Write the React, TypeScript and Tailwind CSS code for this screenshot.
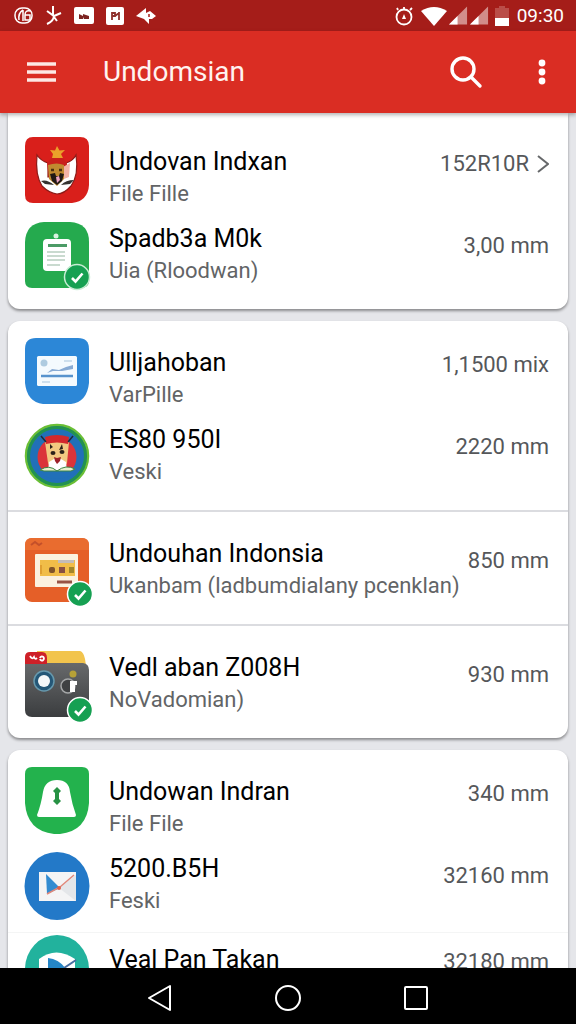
import React from "react";

type IconName = "garuda" | "clipboard" | "chart" | "mascot" | "shop" | "camera" | "bell" | "mail" | "send";

interface Entry {
  title: string;
  subtitle?: string;
  value: string;
  icon: IconName;
  lead?: boolean;
  link?: boolean;
}

const recent: Entry[] = [
  { title: "Undovan Indxan", subtitle: "File Fille", value: "152R10R", icon: "garuda", lead: true, link: true },
  { title: "Spadb3a M0k", subtitle: "Uia (Rloodwan)", value: "3,00 mm", icon: "clipboard" },
];

const reports: Entry[] = [
  { title: "Ulljahoban", subtitle: "VarPille", value: "1,1500 mix", icon: "chart", lead: true },
  { title: "ES80 950I", subtitle: "Veski", value: "2220 mm", icon: "mascot" },
];

const shop: Entry[] = [
  { title: "Undouhan Indonsia", subtitle: "Ukanbam (ladbumdialany pcenklan)", value: "850 mm", icon: "shop" },
];

const camera: Entry[] = [
  { title: "Vedl aban Z008H", subtitle: "NoVadomian)", value: "930 mm", icon: "camera" },
];

const files: Entry[] = [
  { title: "Undowan Indran", subtitle: "File File", value: "340 mm", icon: "bell", lead: true },
  { title: "5200.B5H", subtitle: "Feski", value: "32160 mm", icon: "mail" },
];

const more: Entry[] = [
  { title: "Veal Pan Takan", value: "32180 mm", icon: "send", lead: true },
];

function Badge({ cx, cy, ring }: { cx: number; cy: number; ring: string }) {
  return (
    <g>
      <circle cx={cx} cy={cy} r="12.500" fill="#16a052" stroke={ring} strokeWidth="1.500" />
      <path d={`M${cx - 5} ${cy + 1}l3.500 3.500l7-8`} fill="none" stroke="#fff" strokeWidth="2.600" />
    </g>
  );
}

const drawings: Record<IconName, React.ReactNode> = {
  garuda: (
    <>
      <path d="M8 0H55Q64 0 64 9V48Q63 64 47 66H8Q0 66 0 58V9Q0 0 8 0Z" fill="#d91f1b" />
      <path d="M12 18Q16 24 23 26V40H41V26Q48 24 51 18Q54 38 46 49Q39 57 32 57Q24 56 17 49Q10 38 12 18Z" fill="#fff" stroke="#8d1a17" strokeWidth="1.200" />
      <path d="M22 26Q26 20 32 20Q38 20 42 26L41 34H23Z" fill="#c9201b" />
      <path d="M38 30L45 26L44 40L39 42Z" fill="#f3b3a6" />
      <path d="M23 28Q32 25 39 28V42L32 49L24 42Z" fill="#c08a30" />
      <path d="M25 37L30 36L31 39H34L35 36L39 37L37 44L32 48L27 44Z" fill="#211915" />
      <path d="M26 33h3M34 33h3" stroke="#4a2f10" strokeWidth="2.500" />
      <path d="M31 40L34 39L35 43L32 46Z" fill="#eda4c2" />
      <path d="M16 44Q22 42 29 48L20 47ZM36 48Q41 43 49 43L45 47Z" fill="#353331" />
      <path d="M32 9L34.500 13.500L40 13L36 17L38 21H27L28 17L25 13L30 13.500Z" fill="#eaa12a" />
    </>
  ),
  clipboard: (
    <>
      <path d="M19 0H45Q64 1 64 20V58Q64 66 56 66H7Q0 66 0 59V20Q1 1 19 0Z" fill="#25aa4e" />
      <circle cx="31" cy="14" r="2.500" fill="#d9f2e0" />
      <rect x="18" y="17" width="28" height="32" rx="4" fill="#fff" />
      <rect x="23" y="22" width="19" height="3" fill="#4c9b66" />
      <path d="M22 30H40M22 34H40M22 38H40M22 43H35" stroke="#93b6a0" strokeWidth="1.200" />
      <Badge cx={52} cy={55} ring="#c7ecd3" />
    </>
  ),
  chart: (
    <>
      <path d="M11 0H53Q64 0 64 11V45Q62 64 46 66H18Q2 64 0 45V11Q0 0 11 0Z" fill="#2c87d7" />
      <rect x="12" y="18" width="40" height="30" rx="1.500" fill="#f4fafe" />
      <circle cx="19" cy="25" r="3.500" fill="#aecbe0" />
      <path d="M22 35L27 31L34 32L41 29L48 27V31L37 33L28 33Z" fill="#88abd4" />
      <path d="M16 38H48" stroke="#5793cd" strokeWidth="2.500" />
      <path d="M39 23H47M17 44H25" stroke="#a7c4dc" strokeWidth="1" />
    </>
  ),
  mascot: (
    <>
      <circle cx="32" cy="33" r="31" fill="#2170b8" stroke="#6abf35" strokeWidth="2.500" />
      <circle cx="32" cy="33" r="28.500" fill="none" stroke="#23924f" strokeWidth="3" />
      <circle cx="32" cy="34" r="19.500" fill="#db343a" />
      <path d="M12 46H52Q45 56 32 56Q19 56 12 46Z" fill="#2170b8" />
      <path d="M20 19H44L42 40Q40 46 32 48Q25 46 23 40Z" fill="#f2c981" />
      <path d="M20 14Q32 10 44 14L43 21Q32 18 21 21Z" fill="#d3282d" />
      <path d="M16 13L21 19M48 13L43 19" stroke="#202936" strokeWidth="1.500" />
      <path d="M25 21L28 24L25 26ZM34 27L37 21L38 26Z" fill="#2b2119" />
      <ellipse cx="28" cy="30" rx="2.500" ry="2" fill="#2b2119" />
      <ellipse cx="37" cy="29" rx="2.500" ry="2" fill="#2b2119" />
      <path d="M24 39L29 36H36L41 39L42 48H23Z" fill="#fff" />
      <path d="M29 34L32 35L36 34L35 38L32 41L30 38Z" fill="#9d2028" />
      <path d="M15 47Q24 41 32 48H19ZM32 48Q41 41 50 46L46 48Z" fill="#e9f1cd" stroke="#3d8542" strokeWidth="1" />
    </>
  ),
  shop: (
    <>
      <rect y="1" width="64" height="64" rx="7" fill="#e55f28" />
      <path d="M0 13V8Q0 1 7 1H57Q64 1 64 8V13Z" fill="#e96c2f" />
      <path d="M6 8L10 5L14 8L17 6" fill="none" stroke="#c4502a" strokeWidth="2" />
      <rect x="10" y="17" width="43" height="33" rx="1" fill="#fbf1df" />
      <rect x="15" y="23" width="35" height="16" fill="#f1bd48" />
      <path d="M33 23H49V26H33Z" fill="#c4bcb7" />
      <path d="M16 28V37" stroke="#e0a032" strokeWidth="2" />
      <rect x="24" y="30" width="6" height="6" rx="2" fill="#80542a" />
      <rect x="34" y="30" width="6" height="6" fill="#875044" />
      <rect x="44" y="30" width="5" height="6" fill="#a1852a" />
      <path d="M32 45H47" stroke="#985344" strokeWidth="3" />
      <Badge cx={55} cy={57} ring="#fff" />
    </>
  ),
  camera: (
    <>
      <defs>
        <linearGradient id="camera-body" x1="0" y1="0" x2="0" y2="1">
          <stop offset="0" stopColor="#67696b" />
          <stop offset="1" stopColor="#3b3d3f" />
        </linearGradient>
      </defs>
      <path d="M12 0H55Q60 1 61 16H12Z" fill="#f2c44d" />
      <path d="M0 12H58Q64 13 64 19V59Q64 66 57 66H7Q0 66 0 59Z" fill="url(#camera-body)" />
      <path d="M5 1H17Q22 1 22 7V13H0V6Q0 1 5 1Z" fill="#ce2028" />
      <path d="M5 5Q7 9 9 6Q10 9 12 7M15 7A2 2 0 1 1 15 8" fill="none" stroke="#fff" strokeWidth="1.800" />
      <circle cx="19" cy="30" r="10" fill="#245777" stroke="#6799ad" strokeWidth="1.500" />
      <circle cx="19" cy="30" r="6" fill="#f5f8f9" />
      <circle cx="48" cy="23" r="3.500" fill="#b6a137" />
      <circle cx="43" cy="35" r="7" fill="#3f4143" stroke="#a5a7a8" strokeWidth="1.500" />
      <path d="M45 30H52V34H50V41H45Z" fill="#fff" />
      <Badge cx={55} cy={59} ring="#fff" />
    </>
  ),
  bell: (
    <>
      <path d="M7 0H57Q64 0 64 7V36Q62 64 35 67H29Q2 64 0 36V7Q0 0 7 0Z" fill="#23b24d" />
      <path d="M12 48Q16 38 18 25Q20 13 32 13Q44 13 45 25Q47 37 51 48Q51 50 49 50H14Q12 50 12 48Z" fill="#fff" />
      <path d="M32 20L36 24L34 26V32L36 34L32 38L28 34L30 32V26L28 24Z" fill="#279244" />
    </>
  ),
  mail: (
    <>
      <ellipse cx="32" cy="34" rx="32.500" ry="34" fill="#2379c8" />
      <rect x="14" y="20" width="37" height="29" fill="#f4f4f5" />
      <path d="M34 36L51 23V49Z" fill="#e4e6e9" />
      <path d="M21 22L35 36L22 42Z" fill="#328bd1" />
      <path d="M22 42L35 35L49 23" fill="none" stroke="#e0887a" strokeWidth="1.500" />
      <circle cx="34" cy="36" r="2" fill="#de624d" />
    </>
  ),
  send: (
    <>
      <ellipse cx="32" cy="34" rx="32" ry="34" fill="#22b29d" />
      <path d="M14 24Q31 11 50 24V49H14Z" fill="#fff" />
      <path d="M23 23Q34 24 41 34L23 36Z" fill="#2586c6" />
      <path d="M39 33L51 25" stroke="#456da1" strokeWidth="2" />
    </>
  ),
};

function EntryRow({ entry }: { entry: Entry }) {
  return (
    <li className="flex min-h-[66px] items-start">
      <svg viewBox="0 0 64 66" className="h-[66px] w-16 shrink-0 overflow-visible" aria-hidden="true">
        {drawings[entry.icon]}
      </svg>
      <div className={entry.lead ? "ml-5 min-w-0 flex-1 pt-[9px]" : "ml-5 min-w-0 flex-1 pt-px"}>
        <h3 className="text-[25px] leading-8 whitespace-nowrap text-black">{entry.title}</h3>
        {entry.subtitle && <p className="text-[22px] leading-8 whitespace-nowrap text-[#626466]">{entry.subtitle}</p>}
      </div>
      <div className={entry.lead ? "flex items-center gap-2 pt-[11px]" : "flex items-center gap-2 pt-2"}>
        <span className="text-[22px] leading-8 whitespace-nowrap text-[#55575a]">{entry.value}</span>
        {entry.link && (
          <svg viewBox="0 0 12 20" className="h-5 w-3" fill="none" stroke="#66686a" strokeWidth="2" aria-hidden="true">
            <path d="M1 2L11 10L1 18" />
          </svg>
        )}
      </div>
    </li>
  );
}

function EntryGroup({ entries, className }: { entries: Entry[]; className: string }) {
  return (
    <ul className={`flex flex-col gap-3 pr-[19px] pl-[17px] ${className}`}>
      {entries.map((entry) => <EntryRow key={entry.title} entry={entry} />)}
    </ul>
  );
}

function StatusBar() {
  return (
    <div className="flex h-[31px] shrink-0 items-center justify-between bg-[#a51d19] pr-3 pl-3.5 text-white">
      <div className="flex items-center gap-3">
        <svg viewBox="0 0 20 20" className="size-5" fill="none" stroke="currentColor" strokeWidth="1.500" aria-hidden="true">
          <rect x="1" y="2" width="17" height="15" rx="7" />
          <path d="M9 4Q4 7 5 14M9 4V15M16 5Q11 4 11 9V14H16V9H11" />
        </svg>
        <svg viewBox="0 0 16 20" className="h-5 w-4" fill="none" stroke="currentColor" strokeWidth="2" aria-hidden="true">
          <path d="M7 0V9M1 5L8 10L15 7M8 9Q8 15 1 18M8 11L11 15" />
        </svg>
        <svg viewBox="0 0 20 18" className="h-[18px] w-5" aria-hidden="true">
          <rect width="20" height="17" rx="2" fill="#fff" />
          <path d="M5 12V7L9 9V7L15 9V12H10L9 10V12Z" fill="#7c2321" />
        </svg>
        <svg viewBox="0 0 18 18" className="size-[18px]" aria-hidden="true">
          <rect width="18" height="18" rx="2" fill="#fff" />
          <path d="M6 5V13M6 6H9V9H6M9 9L13 6M13 5V13" fill="none" stroke="#8e302c" strokeWidth="1.800" />
        </svg>
        <svg viewBox="0 0 20 18" className="h-[18px] w-5" aria-hidden="true">
          <path d="M0 9L10 1V6L14 4L20 9L16 12H13V17L8 12Z" fill="#fff" />
          <path d="M13 7V10" stroke="#a51d19" strokeWidth="1.500" />
        </svg>
      </div>
      <div className="flex items-center">
        <svg viewBox="0 0 18 20" className="mr-2 h-5 w-[18px]" fill="none" stroke="currentColor" strokeWidth="1.800" aria-hidden="true">
          <circle cx="9" cy="11" r="7.500" />
          <path d="M9 4V1M3 4L2 2M15 4L17 2" />
          <path d="M9 8L11 13H7Z" fill="currentColor" stroke="none" />
        </svg>
        <svg viewBox="0 0 26 20" className="mr-0.5 h-5 w-[26px]" fill="currentColor" aria-hidden="true">
          <path d="M0 5Q13-3 26 5L13 20Z" />
        </svg>
        <svg viewBox="0 0 20 20" className="mr-0.5 h-5 w-[19px]" aria-hidden="true">
          <path d="M0 19L19 0V19Z" fill="#d28d8a" />
          <path d="M0 19L9 10V19Z" fill="#fff" />
        </svg>
        <svg viewBox="0 0 20 20" className="mr-1.5 h-5 w-[19px]" aria-hidden="true">
          <path d="M0 19L19 0V19Z" fill="#d28d8a" />
          <path d="M0 19L9 10V19Z" fill="#fff" />
        </svg>
        <svg viewBox="0 0 14 20" className="mr-2 h-5 w-3.5" aria-hidden="true">
          <path d="M0 2H4V0H10V2H14V20H0Z" fill="#ba4d48" />
          <path d="M0 12H14V20H0Z" fill="#fff" />
        </svg>
        <span className="text-[19px] leading-7">09:30</span>
      </div>
    </div>
  );
}

function AppBar() {
  return (
    <header className="z-10 flex h-[82px] shrink-0 items-center bg-[#da2d23] pr-4 pl-[19px] text-white shadow-[0_2px_4px_rgba(0,0,0,0.3)]">
      <button aria-label="Menu" className="flex size-11 items-center justify-center">
        <svg viewBox="0 0 30 22" className="h-[22px] w-[30px]" stroke="#fde8e4" strokeWidth="3.500" aria-hidden="true">
          <path d="M1 3H30M1 11H30M1 19H30" />
        </svg>
      </button>
      <h1 className="ml-10 flex-1 text-[28px] leading-9 text-[#fff3f0]">Undomsian</h1>
      <button aria-label="Search" className="mr-9 flex size-11 items-center justify-center">
        <svg viewBox="0 0 34 34" className="size-[34px]" fill="none" stroke="currentColor" strokeWidth="3.400" strokeLinecap="round" aria-hidden="true">
          <circle cx="14" cy="14" r="11" />
          <path d="M22 22L31 31" />
        </svg>
      </button>
      <button aria-label="More options" className="flex h-11 w-9 items-center justify-center">
        <svg viewBox="0 0 8 28" className="h-7 w-2" fill="currentColor" aria-hidden="true">
          <circle cx="4" cy="5" r="3.400" />
          <circle cx="4" cy="14" r="3.400" />
          <circle cx="4" cy="23" r="3.400" />
        </svg>
      </button>
    </header>
  );
}

function NavBar() {
  return (
    <nav className="flex h-14 shrink-0 items-center justify-center gap-[84px] bg-black pt-1 text-white">
      <button aria-label="Back" className="flex size-11 items-center justify-center">
        <svg viewBox="0 0 24 28" className="h-7 w-6" fill="none" stroke="currentColor" strokeWidth="2" strokeLinejoin="round" aria-hidden="true">
          <path d="M22 2V26L1 14Z" />
        </svg>
      </button>
      <button aria-label="Home" className="flex size-11 items-center justify-center">
        <svg viewBox="0 0 28 28" className="size-7" fill="none" stroke="currentColor" strokeWidth="2" aria-hidden="true">
          <circle cx="14" cy="14" r="12" />
        </svg>
      </button>
      <button aria-label="Recent apps" className="flex size-11 items-center justify-center">
        <svg viewBox="0 0 24 24" className="size-6" fill="none" stroke="currentColor" strokeWidth="2" aria-hidden="true">
          <rect x="1" y="1" width="22" height="22" rx="1" />
        </svg>
      </button>
    </nav>
  );
}

export default function App() {
  return (
    <div className="flex h-screen flex-col overflow-hidden bg-[#e5e6ea] font-['Roboto',sans-serif]">
      <StatusBar />
      <AppBar />
      <main className="flex min-h-0 flex-1 flex-col gap-3 overflow-hidden px-2">
        <section className="shrink-0 rounded-b-xl bg-white shadow-[0_2px_3px_rgba(0,0,0,0.4)]">
          <EntryGroup entries={recent} className="pt-6 pb-[21px]" />
        </section>
        <section className="shrink-0 divide-y-2 divide-[#dbdce0] rounded-xl bg-white shadow-[0_2px_3px_rgba(0,0,0,0.4)]">
          <EntryGroup entries={reports} className="pt-[17px] pb-[21px]" />
          <EntryGroup entries={shop} className="pt-[25px] pb-[21px]" />
          <EntryGroup entries={camera} className="pt-[25px] pb-[21px]" />
        </section>
        <section className="shrink-0 divide-y divide-[#f4f5f5] rounded-xl bg-white shadow-[0_2px_3px_rgba(0,0,0,0.4)]">
          <EntryGroup entries={files} className="pt-[17px] pb-3.5" />
          <EntryGroup entries={more} className="pt-0.5 pb-6" />
        </section>
      </main>
      <NavBar />
    </div>
  );
}
